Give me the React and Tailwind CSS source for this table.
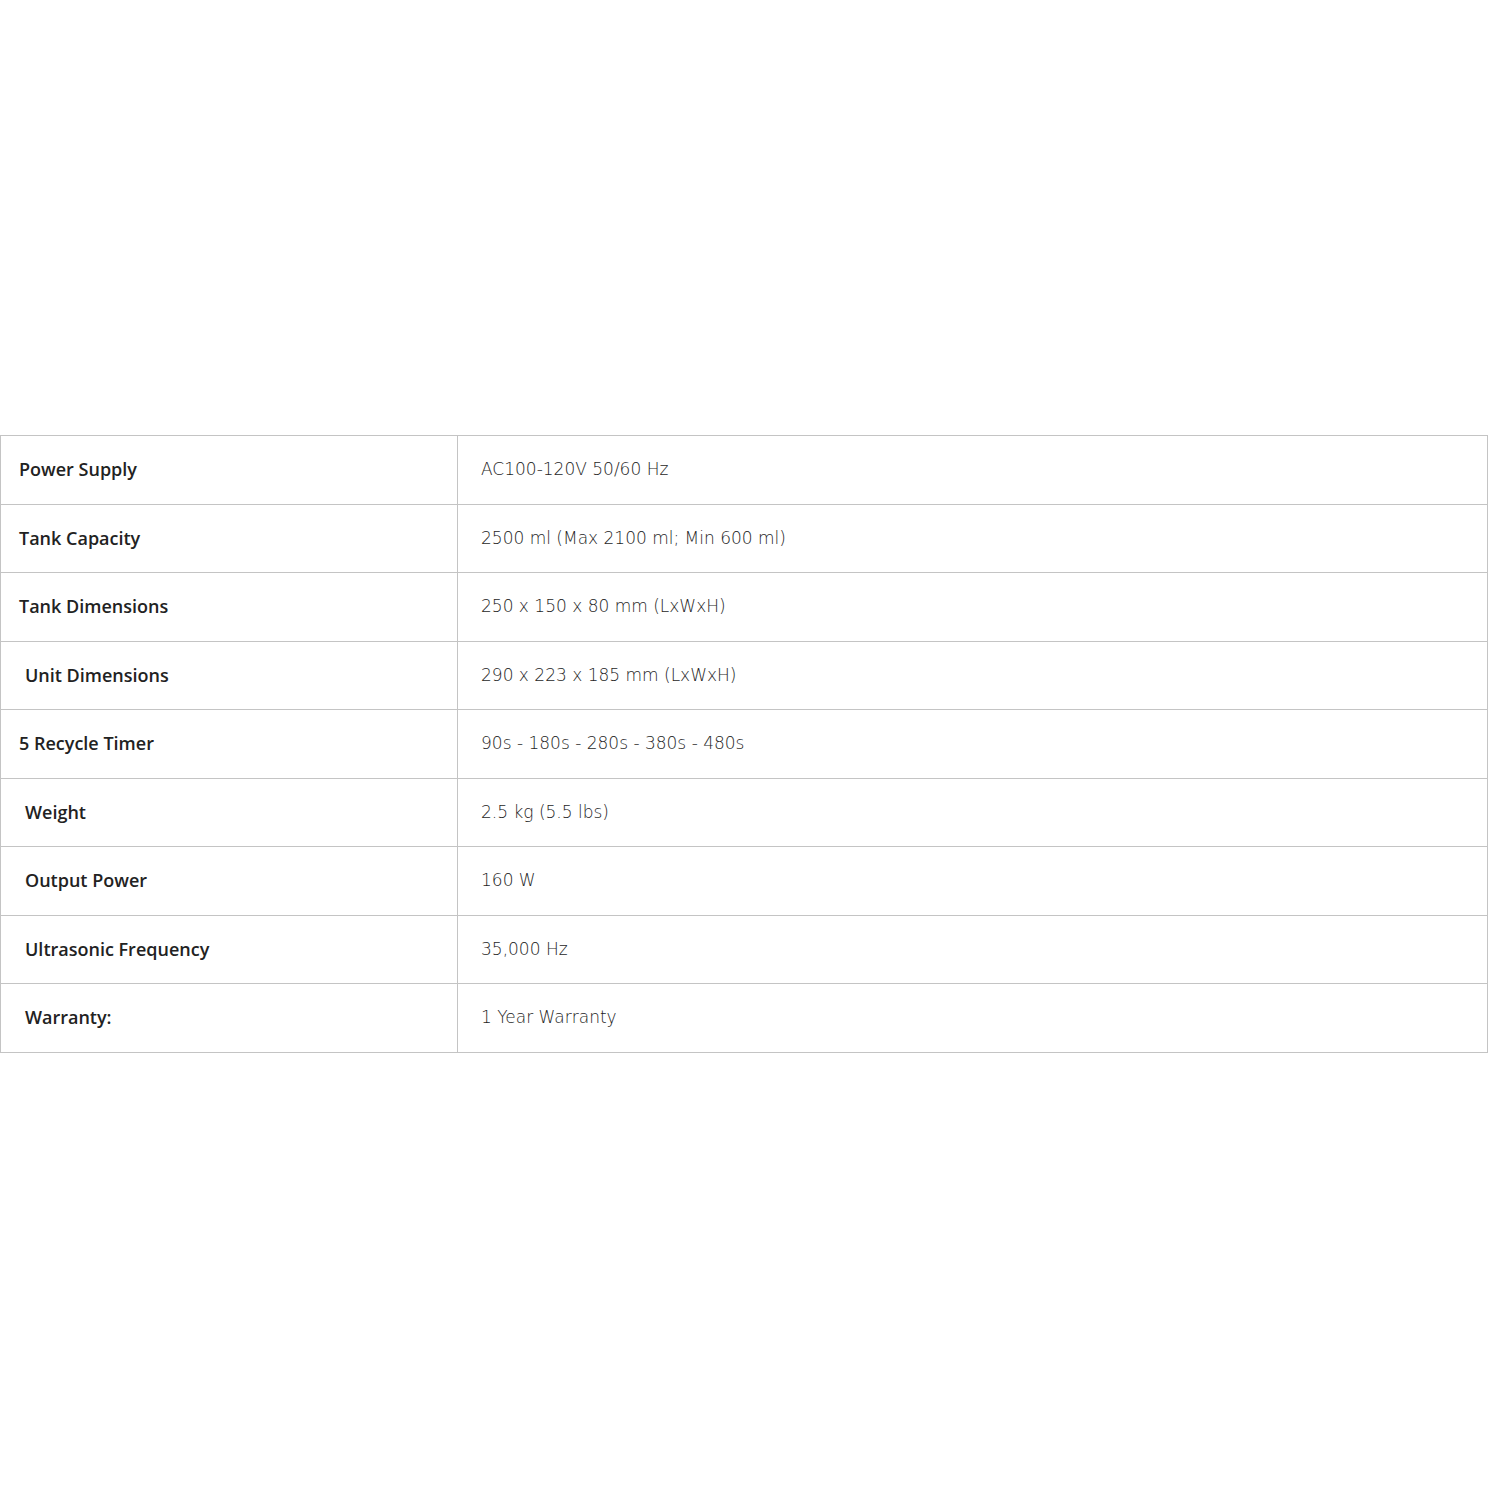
import React from 'react';

const specs = [
  { label: 'Power Supply', value: 'AC100-120V 50/60 Hz', pad: false },
  { label: 'Tank Capacity', value: '2500 ml (Max 2100 ml; Min 600 ml)', pad: false },
  { label: 'Tank Dimensions', value: '250 x 150 x 80 mm (LxWxH)', pad: false },
  { label: 'Unit Dimensions', value: '290 x 223 x 185 mm (LxWxH)', pad: true },
  { label: '5 Recycle Timer', value: '90s - 180s - 280s - 380s - 480s', pad: false },
  { label: 'Weight', value: '2.5 kg (5.5 lbs)', pad: true },
  { label: 'Output Power', value: '160 W', pad: true },
  { label: 'Ultrasonic Frequency', value: '35,000 Hz', pad: true },
  { label: 'Warranty:', value: '1 Year Warranty', pad: true },
];

const App = () => {
  return (
    <div className="min-h-[1489px] bg-white pt-[435px]">
      <table className="w-[1488px] border-collapse">
        <tbody>
          {specs.map((row, index) => (
            <tr key={index} className="h-[68.5px]">
              <td className={`w-[457px] border border-[#c4c4c4] font-['Open_Sans',sans-serif] text-[18px] font-semibold text-[#222] ${row.pad ? 'pl-[24px]' : 'pl-[18px]'}`}>
                {row.label}
              </td>
              <td className="border border-[#c4c4c4] pl-[23px] font-['DejaVu_Sans',sans-serif] text-[17px] font-light text-[#1e1e1e]">
                {row.value}
              </td>
            </tr>
          ))}
        </tbody>
      </table>
    </div>
  );
};

export default App;
